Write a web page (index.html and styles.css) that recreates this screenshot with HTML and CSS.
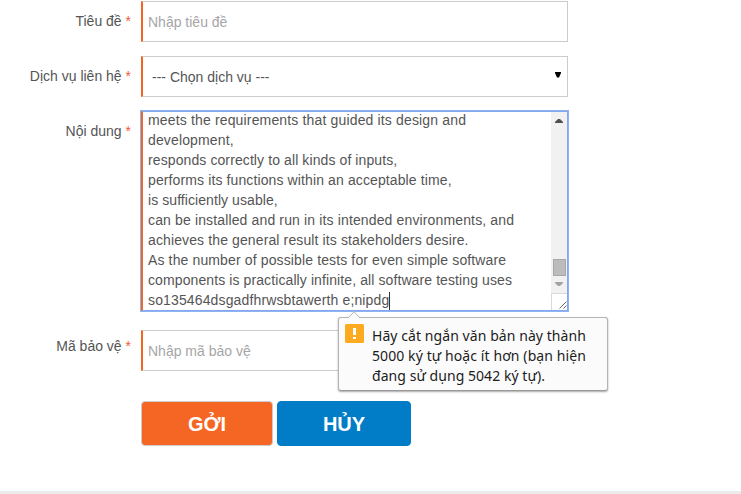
FILE: index.html
```html
<!DOCTYPE html>
<html lang="vi">
<head>
<meta charset="utf-8">
<title>Liên hệ</title>
<link rel="stylesheet" href="styles.css">
</head>
<body>
<form class="form" novalidate>
  <div class="row">
    <label class="label" for="title"><span>Tiêu đề</span> <span class="req">*</span></label>
    <input class="field" id="title" type="text" placeholder="Nhập tiêu đề">
  </div>
  <div class="row">
    <label class="label"><span>Dịch vụ liên hệ</span> <span class="req">*</span></label>
    <div class="field select"><span>--- Chọn dịch vụ ---</span>
      <svg width="6" height="6" viewBox="0 0 6 6"><path d="M0 0h6v1L4 5.500H2L0 1z"/></svg>
    </div>
  </div>
  <div class="row">
    <label class="label"><span>Nội dung</span> <span class="req">*</span></label>
    <div class="field area">
      <div class="lines">
        <div><span class="l1">meets the requirements that guided its design and</span></div>
        <div><span class="l2">development,</span></div>
        <div><span class="l3">responds correctly to all kinds of inputs,</span></div>
        <div><span class="l4">performs its functions within an acceptable time,</span></div>
        <div><span class="l5">is sufficiently usable,</span></div>
        <div><span class="l6">can be installed and run in its intended environments, and</span></div>
        <div><span class="l7">achieves the general result its stakeholders desire.</span></div>
        <div><span class="l8">As the number of possible tests for even simple software</span></div>
        <div><span class="l9">components is practically infinite, all software testing uses</span></div>
        <div><span class="l10">so135464dsgadfhrwsbtawerth e;nipdg</span><i class="caret"></i></div>
      </div>
      <div class="scroll">
        <div class="track">
          <svg class="arrow" width="8" height="4" viewBox="0 0 8 4"><path fill="#505050" d="M3 0h2l3 3v1H0V3z"/></svg>
          <div class="thumb"></div>
          <svg class="arrow" width="8" height="4" viewBox="0 0 8 4"><path fill="#a3a3a3" d="M0 0h8v1L5 4H3L0 1z"/></svg>
        </div>
        <div class="corner">
          <svg width="8" height="8" viewBox="0 0 8 8" stroke="#555" fill="none" stroke-width=".9"><path d="M.5 7.500l7-7M4.500 7.500l3-3"/></svg>
        </div>
      </div>
      <div class="tip">
        <svg class="nub" width="12" height="7" viewBox="0 0 12 7"><path d="M0 7L6 .7L12 7" fill="#fbfbfb" stroke="#b4b4b4"/></svg>
        <svg class="warn" width="19" height="19" viewBox="0 0 19 19"><rect width="19" height="19" rx="1.500" fill="#fdaa20"/><path fill="#fff" d="M8 4h3v7H8zM8 13h3v2H8z"/></svg>
        <div class="tiptext">
          <div><span class="m1">Hãy cắt ngắn văn bản này thành</span></div>
          <div><span class="m2">5000 ký tự hoặc ít hơn (bạn hiện</span></div>
          <div><span class="m3">đang sử dụng 5042 ký tự).</span></div>
        </div>
      </div>
    </div>
  </div>
  <div class="row code">
    <label class="label" for="code"><span>Mã bảo vệ</span> <span class="req">*</span></label>
    <input class="field" id="code" type="text" placeholder="Nhập mã bảo vệ">
  </div>
  <div class="buttons">
    <button class="btn send" type="button"><span>GỞI</span></button>
    <button class="btn cancel" type="button"><span>HỦY</span></button>
  </div>
</form>
<div class="rule"></div>
</body>
</html>
```
FILE: styles.css
```css
* { box-sizing: border-box; }
body {
  margin: 0;
  height: 494px;
  overflow: hidden;
  display: flex;
  flex-direction: column;
  background: #fff;
  color: #555;
  font: 14px/20px "Liberation Sans", Arial, sans-serif;
}
.form { padding-top: 1px; }
.row { display: flex; margin-bottom: 14px; }
.label { width: 131px; margin-right: 10px; padding-top: 10px; text-align: right; white-space: nowrap; }
.req { color: #f15a3a; }
.field {
  width: 427px;
  height: 41px;
  margin: 0;
  padding: 1px 5px 0;
  border: 1px solid #ccc;
  border-left: 2px solid #f26522;
  background: #fff;
  color: #555;
  font: inherit;
  outline: 0;
}
.field::placeholder { color: #a6a6a6; opacity: 1; }
.select { display: flex; align-items: center; justify-content: space-between; padding: 1px 6px 0 9px; }
.select svg { margin-top: -4px; }
.area {
  position: relative;
  display: flex;
  height: 200px;
  padding: 0;
  border-color: #84a8ee;
  border-left-color: #f26522;
  box-shadow: 0 0 0 1px #8fb2f2;
}
.lines { flex: 1; height: 198px; overflow: hidden; padding-left: 5px; white-space: nowrap; }
.lines > div { height: 20px; }
.lines > div:first-child { margin-top: -2px; }
.l1 { letter-spacing: .155px; }
.l2 { letter-spacing: .14px; }
.l3 { letter-spacing: .1px; }
.l4 { letter-spacing: .115px; }
.l5 { letter-spacing: .07px; }
.l6 { letter-spacing: .14px; }
.l7 { letter-spacing: .12px; }
.l8 { letter-spacing: .13px; }
.l9 { letter-spacing: .1px; }
.l10 { letter-spacing: .14px; }
.caret { display: inline-block; width: 1px; height: 19px; background: #333; vertical-align: -6px; }
.scroll { width: 16px; display: flex; flex-direction: column; }
.track { height: 181px; background: #f1f1f1; display: flex; flex-direction: column; align-items: center; padding: 7px 0; }
.thumb { width: 13px; height: 17px; margin: auto 0 6px; background: #bcbcbc; border: 1px solid #a8a8a8; }
.corner { flex: 1; border: solid #d9d9d9; border-width: 1px 0 0 1px; display: flex; align-items: flex-end; justify-content: flex-end; }
.corner svg { margin-bottom: 1px; }
.tip {
  position: absolute;
  z-index: 2;
  left: 195px;
  top: 205px;
  width: 270px;
  height: 74px;
  padding: 8px 6px;
  display: flex;
  border: 1px solid #b4b4b4;
  border-bottom-color: #999;
  border-radius: 3px;
  background: #fbfbfb;
  box-shadow: 0 1px 2px rgba(0, 0, 0, .35);
  color: #1c1c1c;
  font: 14px/20px "Noto Sans", "Open Sans", sans-serif;
  white-space: nowrap;
}
.m1 { letter-spacing: .07px; }
.m2 { letter-spacing: .09px; }
.m3 { letter-spacing: .05px; }
.warn { margin: -2px 8px 0 0; }
.nub { position: absolute; left: 9px; top: -7px; }
.code { margin-top: 19px; }
.code .label { padding-top: 6px; }
.row.code { margin-bottom: 30px; }
.buttons { display: flex; gap: 4px; margin-left: 141px; }
.btn { width: 132px; height: 45px; margin: 0; padding: 1px 0 0; border: 1px solid #ccc; border-radius: 4px; background: #f56524; color: #fff; font: bold 20px/42px "Liberation Sans", Arial, sans-serif; }
.cancel { width: 134px; border-color: #007dc6; background: #007dc6; }
.rule { flex: none; height: 3px; margin-top: auto; background: #ebebeb; }
```
